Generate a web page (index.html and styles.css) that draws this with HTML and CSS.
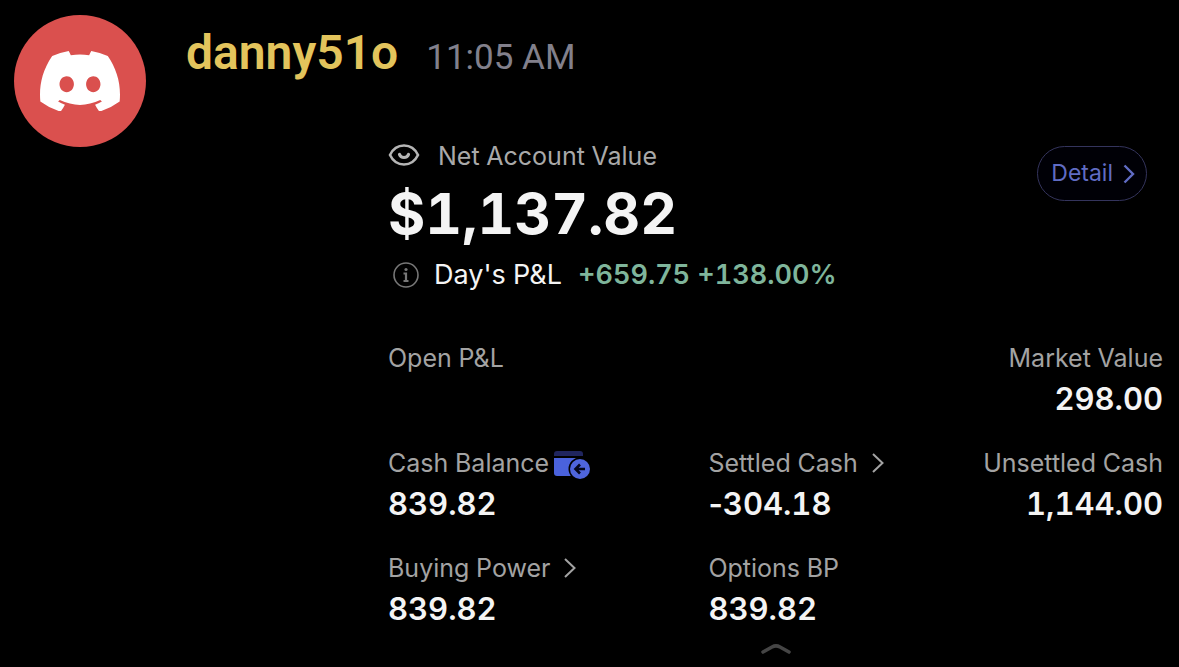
FILE: index.html
```html
<!DOCTYPE html>
<html lang="en">
<head>
<meta charset="utf-8">
<meta name="viewport" content="width=device-width, initial-scale=1">
<title>danny51o</title>
<link rel="stylesheet" href="styles.css">
</head>
<body>
<article class="message">
  <div class="avatar">
    <svg class="avatar-logo" viewBox="0 0 127.14 96.36" role="img" aria-label="Discord"><path fill="currentColor" d="M107.7,8.07A105.15,105.15,0,0,0,81.47,0a72.06,72.06,0,0,0-3.36,6.83A97.68,97.68,0,0,0,49,6.83,72.37,72.37,0,0,0,45.64,0,105.89,105.89,0,0,0,19.39,8.09C2.79,32.65-1.71,56.6.54,80.21h0A105.73,105.73,0,0,0,32.71,96.36,77.7,77.7,0,0,0,39.6,85.25a68.42,68.42,0,0,1-10.85-5.18c.91-.66,1.8-1.34,2.66-2a75.57,75.57,0,0,0,64.32,0c.87.71,1.76,1.39,2.66,2a68.68,68.68,0,0,1-10.87,5.19,77,77,0,0,0,6.89,11.1A105.25,105.25,0,0,0,126.6,80.22h0C129.24,52.84,122.09,29.11,107.7,8.07ZM42.45,65.69C36.18,65.69,31,60,31,53s5-12.74,11.43-12.74S54,46,53.89,53,48.84,65.69,42.45,65.69Zm42.24,0C78.41,65.69,73.25,60,73.25,53s5-12.74,11.44-12.74S96.23,46,96.12,53,91.08,65.69,84.69,65.69Z"/></svg>
  </div>
  <div class="body">
    <header class="byline">
      <span class="author">danny51o</span>
      <time class="time" datetime="11:05">11:05 AM</time>
    </header>
    <section class="account">
      <div class="summary">
        <div class="net">
          <div class="net-label">
            <svg class="eye" viewBox="0 0 32 24" aria-hidden="true"><g fill="none" stroke="currentColor" stroke-linecap="round"><path stroke-width="2.6" d="M2 11C8-1.600 24-1.600 30 11C24 23.600 8 23.600 2 11Z"/><path stroke-width="3.200" d="M11.500 10.500C13 14.500 19 14.500 20.500 10.500"/></g></svg>
            <span>Net Account Value</span>
          </div>
          <div class="net-value">$1,137.82</div>
          <div class="day">
            <svg class="info" viewBox="0 0 26 26" aria-hidden="true"><g fill="none" stroke="currentColor" stroke-width="1.6"><circle cx="13" cy="13" r="12"/><path stroke-width="2.200" d="M10.500 11.500H13V19M10.500 19H15.500"/></g><circle cx="13" cy="7.500" r="1.600" fill="currentColor"/></svg>
            <span class="day-label">Day's P&amp;L</span>
            <span class="gain">+659.75 +138.00%</span>
          </div>
        </div>
        <button class="detail" type="button">Detail
          <svg class="detail-arrow" viewBox="0 0 12 20" aria-hidden="true"><path fill="none" stroke="currentColor" stroke-width="2.400" d="M1.500 1.500L10 10L1.500 18.500"/></svg>
        </button>
      </div>
      <dl class="stats">
        <div class="stat wide"><dt>Open P&amp;L</dt></div>
        <div class="stat end"><dt>Market Value</dt><dd>298.00</dd></div>
        <div class="stat">
          <dt>Cash Balance<svg class="wallet" viewBox="0 0 38 30" aria-hidden="true"><path fill="#20255e" d="M1 6V4Q1 1 4 1H27Q30 1 30 4V6Z"/><path fill="#4a62dc" d="M1 8H30V26H4Q1 26 1 23Z"/><circle cx="27" cy="19" r="11.500" fill="#000"/><circle cx="27" cy="19" r="10" fill="#4f65dc"/><path fill="none" stroke="#05071c" stroke-width="2.600" d="M32 19H23M27 14.500L22.500 19L27 23.500"/></svg></dt>
          <dd>839.82</dd>
        </div>
        <div class="stat">
          <dt>Settled Cash<svg class="arrow" viewBox="0 0 12 20" aria-hidden="true"><path fill="none" stroke="currentColor" stroke-width="2" d="M1 1L10.500 10L1 19"/></svg></dt>
          <dd><span class="sign">-</span>304.18</dd>
        </div>
        <div class="stat end"><dt>Unsettled Cash</dt><dd>1,144.00</dd></div>
        <div class="stat">
          <dt>Buying Power<svg class="arrow" viewBox="0 0 12 20" aria-hidden="true"><path fill="none" stroke="currentColor" stroke-width="2" d="M1 1L10.500 10L1 19"/></svg></dt>
          <dd>839.82</dd>
        </div>
        <div class="stat"><dt>Options BP</dt><dd>839.82</dd></div>
      </dl>
      <button class="collapse" type="button" aria-label="Collapse"><svg class="collapse-icon" viewBox="0 0 32 12" aria-hidden="true"><path fill="none" stroke="currentColor" stroke-width="3.600" stroke-linecap="round" stroke-linejoin="round" d="M3 9L12 4Q16 1.800 20 4L29 9"/></svg></button>
    </section>
  </div>
</article>
</body>
</html>
```
FILE: styles.css
```css
* {
  box-sizing: border-box;
}

body {
  margin: 0;
  background: #000;
  color: #f4f4f4;
  font-family: Inter, "Liberation Sans", sans-serif;
}

.message {
  display: flex;
  gap: 40px;
  padding: 15px 16px 8px 14px;
}

.avatar {
  display: flex;
  flex: none;
  align-items: center;
  justify-content: center;
  width: 132px;
  height: 132px;
  border-radius: 50%;
  background: #da504e;
  color: #fff;
}

.avatar-logo {
  width: 80px;
}

.body {
  flex: 1;
}

.byline {
  display: flex;
  align-items: baseline;
  gap: 28px;
  height: 125px;
  font-family: Roboto, sans-serif;
  line-height: 76px;
}

.author {
  color: #e3c45c;
  font-size: 48px;
  font-weight: 600;
}

.time {
  color: #82808c;
  font-size: 35px;
}

.account {
  margin-left: 202px;
  font-variant-numeric: tabular-nums;
}

.summary {
  display: flex;
  align-items: flex-start;
  justify-content: space-between;
}

.net-label {
  display: flex;
  align-items: center;
  gap: 18px;
  color: #a9a9a9;
  font-size: 25px;
  line-height: 32px;
}

.eye {
  width: 32px;
  height: 24px;
  color: #b5b5b5;
}

.net-value {
  margin: 9px 0 12px;
  font-size: 57px;
  font-weight: 700;
  line-height: 66px;
}

.day {
  display: flex;
  align-items: center;
  font-size: 27px;
  line-height: 32px;
}

.info {
  width: 26px;
  height: 26px;
  margin: 0 15px 0 5px;
  color: #777;
}

.day-label {
  margin-right: 16px;
}

.gain {
  color: #7fb59b;
  font-weight: 600;
}

.detail {
  display: flex;
  align-items: center;
  gap: 10px;
  margin: 6px 16px 0 0;
  padding: 0 11px 0 13px;
  border: 1px solid #34345c;
  border-radius: 28px;
  background: #000006;
  color: #606cc4;
  font: inherit;
  font-size: 23px;
  line-height: 53px;
}

.detail-arrow {
  width: 12px;
  height: 20px;
}

.stats {
  display: grid;
  grid-template-columns: 320fr 227fr 227fr;
  row-gap: 24px;
  margin: 47px 0 0;
}

.wide {
  grid-column: span 2;
}

.end {
  text-align: right;
}

dt {
  color: #a3a3a3;
  font-size: 25px;
  line-height: 41px;
  white-space: nowrap;
}

dd {
  margin: 0;
  font-size: 31px;
  font-weight: 600;
  line-height: 40px;
}

.sign {
  font-variant-numeric: normal;
}

.arrow {
  width: 12px;
  height: 20px;
  margin-left: 14px;
  vertical-align: -1px;
}

.wallet {
  width: 38px;
  height: 30px;
  margin-left: 4px;
  vertical-align: middle;
}

.collapse {
  display: block;
  margin: 14px auto 0;
  padding: 0;
  border: 0;
  background: none;
  color: #454545;
}

.collapse-icon {
  display: block;
  width: 32px;
  height: 12px;
}
```
